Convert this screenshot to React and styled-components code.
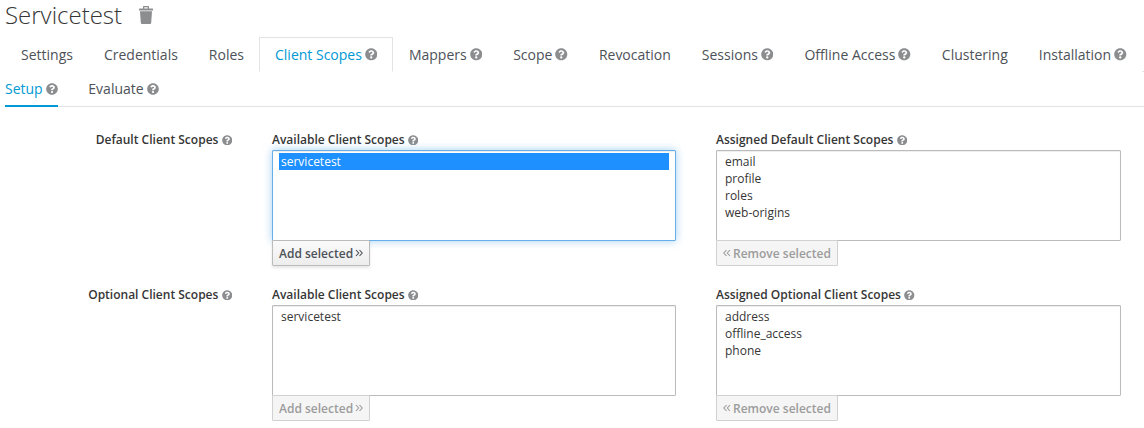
import React from 'react'
import styled, { createGlobalStyle } from 'styled-components'
import { FaQuestionCircle } from 'react-icons/fa'

const GlobalStyle = createGlobalStyle`
    html, body {
        margin: 0;
        background: #fff;
    }
    body {
        font-family: "Open Sans", "Liberation Sans", sans-serif;
        font-size: 12px;
        color: #363636;
        overflow: hidden;
    }
`

const mainTabs = [
    { name: 'Settings' },
    { name: 'Credentials' },
    { name: 'Roles' },
    { name: 'Client Scopes', help: true, active: true },
    { name: 'Mappers', help: true },
    { name: 'Scope', help: true },
    { name: 'Revocation' },
    { name: 'Sessions', help: true },
    { name: 'Offline Access', help: true },
    { name: 'Clustering' },
    { name: 'Installation', help: true },
]

function Help({ size = 12.5 }) {
    return (
        <HelpIcon>
            <FaQuestionCircle size={size} />
        </HelpIcon>
    )
}

function Trash() {
    return (
        <TrashIcon width="16" height="18" viewBox="0 0 16 18" aria-hidden="true">
            <path d="M5 2.500V1c0-.6.4-1 1-1h4c.6 0 1 .4 1 1v1.500h3.500c.3 0 .5.2.5.5v1.500H1V3c0-.3.2-.5.5-.5zm1.300 0h3.400V1.200H6.300z" />
            <path d="M2 5.300h12l-.8 11.400c-.1.8-.6 1.300-1.300 1.300H4.100c-.7 0-1.200-.5-1.300-1.300z" />
        </TrashIcon>
    )
}

function Chevrons({ left }) {
    return (
        <ChevronIcon width="8" height="8" viewBox="0 0 8 8" aria-hidden="true">
            <path d={left ? 'M3.500 1 .8 4l2.700 3M7 1 4.300 4 7 7' : 'M1 1l2.700 3L1 7M4.500 1l2.700 3-2.700 3'} />
        </ChevronIcon>
    )
}

function ScopeColumn({ title, items, selected, focused, button, enabled, left }) {
    return (
        <Column>
            <ColumnTitle>
                {title} <Help size={10.5} />
            </ColumnTitle>
            <ListBox $focused={focused}>
                {items.map((item) => (
                    <Option key={item} $selected={selected === item}>{item}</Option>
                ))}
            </ListBox>
            <MoveButton $enabled={enabled}>
                {left && <Chevrons left />}
                {button}
                {!left && <Chevrons />}
            </MoveButton>
        </Column>
    )
}

function App() {
    return (
        <Page>
            <GlobalStyle />
            <Heading>
                <Title>Servicetest</Title>
                <Trash />
            </Heading>
            <Tabs>
                {mainTabs.map((tab) => (
                    <Tab key={tab.name} $active={tab.active}>
                        {tab.name}
                        {tab.help && <Help />}
                    </Tab>
                ))}
            </Tabs>
            <SubTabs>
                <SubTab $active>Setup <Help size={12} /></SubTab>
                <SubTab>Evaluate <Help size={12} /></SubTab>
            </SubTabs>
            <Form>
                <RowLabel>Default Client Scopes <Help size={10.5} /></RowLabel>
                <ScopeColumn
                    title="Available Client Scopes"
                    items={['servicetest']}
                    selected="servicetest"
                    focused
                    enabled
                    button="Add selected"
                />
                <ScopeColumn
                    title="Assigned Default Client Scopes"
                    items={['email', 'profile', 'roles', 'web-origins']}
                    button="Remove selected"
                    left
                />
                <RowLabel>Optional Client Scopes <Help size={10.5} /></RowLabel>
                <ScopeColumn
                    title="Available Client Scopes"
                    items={['servicetest']}
                    button="Add selected"
                />
                <ScopeColumn
                    title="Assigned Optional Client Scopes"
                    items={['address', 'offline_access', 'phone']}
                    button="Remove selected"
                    left
                />
            </Form>
        </Page>
    )
}

export default App

const Page = styled.div`
    width: 1144px;
    height: 428px;
    overflow: hidden;
`
const Heading = styled.div`
    display: flex;
    align-items: center;
    height: 37px;
    padding-left: 5px;
    padding-bottom: 7px;
    box-sizing: border-box;
`
const Title = styled.h1`
    margin: 0;
    font-size: 24px;
    font-weight: 300;
    line-height: 30px;
    color: #363636;
`
const TrashIcon = styled.svg`
    margin-left: 16px;
    fill: #8b8d8f;
`
const Tabs = styled.div`
    display: flex;
    height: 35px;
    box-sizing: border-box;
    margin-left: 5px;
    border-bottom: 1px solid #e3e3e3;
`
const Tab = styled.div`
    display: flex;
    align-items: center;
    gap: 3px;
    height: 35px;
    padding: 0 ${(p) => (p.$active ? '14.5px' : '14px')} 0 15px;
    font-size: 14px;
    white-space: nowrap;
    box-sizing: border-box;
    color: ${(p) => (p.$active ? '#0099d3' : '#4d5258')};
    background: #fff;
    border: 1px solid ${(p) => (p.$active ? '#e3e3e3' : 'transparent')};
    border-bottom: 1px solid ${(p) => (p.$active ? '#fff' : 'transparent')};
`
const HelpIcon = styled.span`
    display: inline-flex;
    color: #8b8d8f;
    vertical-align: -1px;
`
const SubTabs = styled.div`
    display: flex;
    gap: 30px;
    height: 35px;
    box-sizing: border-box;
    margin-left: 5px;
    border-bottom: 1px solid #e3e3e3;
`
const SubTab = styled.div`
    height: 35px;
    line-height: 34px;
    font-size: 14px;
    box-sizing: border-box;
    color: ${(p) => (p.$active ? '#0099d3' : '#4d5258')};
    border-bottom: 2px solid ${(p) => (p.$active ? '#0099d3' : 'transparent')};
`
const Form = styled.div`
    display: grid;
    grid-template-columns: 232px 404px 405px;
    column-gap: 40px;
    row-gap: 20px;
    margin-top: 24px;
`
const RowLabel = styled.div`
    line-height: 17px;
    font-weight: 600;
    text-align: right;
    white-space: nowrap;
`
const Column = styled.div`
    display: flex;
    flex-direction: column;
    align-items: flex-start;
`
const ColumnTitle = styled.div`
    height: 19px;
    line-height: 17px;
    font-weight: 600;
    white-space: nowrap;
`
const ListBox = styled.div`
    width: 100%;
    height: 91px;
    box-sizing: border-box;
    padding: 2px 8px;
    background: #fff;
    border: 1px solid ${(p) => (p.$focused ? '#66afe9' : '#bbb')};
    border-radius: 1px;
    box-shadow: ${(p) =>
        p.$focused
            ? 'inset 0 1px 1px rgba(3,3,3,.075), 0 0 8px rgba(102,175,233,.6)'
            : 'inset 0 1px 1px rgba(3,3,3,.075)'};
`
const Option = styled.div`
    height: 17px;
    line-height: 17px;
    margin: 0 -2px;
    padding: 0 2px;
    color: ${(p) => (p.$selected ? '#fff' : '#363636')};
    background: ${(p) => (p.$selected ? '#1e90ff' : 'transparent')};
`
const ChevronIcon = styled.svg`
    fill: none;
    stroke: currentColor;
    stroke-width: 1.1;
`
const MoveButton = styled.button`
    display: flex;
    align-items: center;
    gap: 2px;
    height: 26px;
    margin-top: -1px;
    padding: 0 6px;
    font: 600 12px "Open Sans", "Liberation Sans", sans-serif;
    white-space: nowrap;
    color: ${(p) => (p.$enabled ? '#4d5258' : '#9c9c9c')};
    background: ${(p) => (p.$enabled ? 'linear-gradient(#fafafa, #ededed)' : '#f5f5f5')};
    border: 1px solid ${(p) => (p.$enabled ? '#bbb' : '#d1d1d1')};
    border-radius: 1px;
    box-shadow: ${(p) => (p.$enabled ? '0 2px 3px rgba(3,3,3,.1)' : 'none')};
`
